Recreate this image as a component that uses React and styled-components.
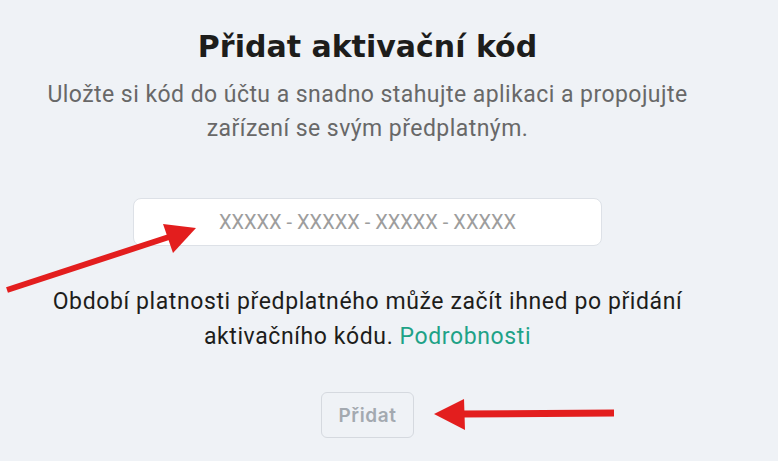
import React from "react";
import styled, { createGlobalStyle } from "styled-components";

const Global = createGlobalStyle`
  html, body { margin: 0; padding: 0; background: #eff2f6; }
  body { font-family: Roboto, "Noto Sans", sans-serif; }
  * { box-sizing: border-box; }
`;

const Page = styled.div`
  position: relative;
  width: 778px;
  height: 461px;
  overflow: hidden;
  background: #eff2f6;
`;

const Column = styled.main`
  width: 735px;
  display: flex;
  flex-direction: column;
  align-items: center;
  padding-top: 28px;
`;

const Title = styled.h1`
  margin: 0;
  font-family: "DejaVu Sans", Inter, sans-serif;
  font-weight: 700;
  font-size: 30px;
  line-height: 38px;
  color: #1d1d1b;
`;

const Subtitle = styled.p`
  margin: 12px 0 0;
  width: 670px;
  text-align: center;
  font-size: 23px;
  letter-spacing: 0.45px;
  line-height: 34px;
  color: #686868;
`;

const CodeInput = styled.input`
  margin-top: 52px;
  width: 469px;
  height: 48px;
  border: 1px solid #dde1e7;
  border-radius: 8px;
  background: #ffffff;
  text-align: center;
  font-family: Roboto, sans-serif;
  font-size: 20px;
  color: #333;
  outline: none;
  &::placeholder { color: #9d9d9d; }
`;

const Note = styled.p`
  margin: 38px 0 0;
  width: 670px;
  text-align: center;
  font-size: 23px;
  letter-spacing: 0.6px;
  line-height: 35px;
  color: #1d1d1b;
`;

const Link = styled.a`
  color: #1ea287;
  text-decoration: none;
`;

const AddButton = styled.button`
  margin-top: 38px;
  width: 93px;
  height: 46px;
  border: 1px solid #d5d9df;
  border-radius: 6px;
  background: transparent;
  font-family: Inter, sans-serif;
  font-weight: 600;
  font-size: 19px;
  letter-spacing: 0.6px;
  color: #a3a9b0;
`;

const Overlay = styled.svg`
  position: absolute;
  left: 0;
  top: 0;
  pointer-events: none;
`;

export default function App() {
  return (
    <Page>
      <Global />
      <Column>
        <Title>Přidat aktivační kód</Title>
        <Subtitle>
          Uložte si kód do účtu a snadno stahujte aplikaci a propojujte
          zařízení se svým předplatným.
        </Subtitle>
        <CodeInput placeholder="XXXXX - XXXXX - XXXXX - XXXXX" />
        <Note>
          Období platnosti předplatného může začít ihned po přidání
          aktivačního kódu. <Link href="#">Podrobnosti</Link>
        </Note>
        <AddButton disabled>Přidat</AddButton>
      </Column>
      <Overlay width="778" height="461" viewBox="0 0 778 461">
        <line x1="7" y1="290" x2="172" y2="236" stroke="#e31e1e" strokeWidth="6" />
        <polygon points="196,228 163,224 173,253" fill="#e31e1e" />
        <line x1="614" y1="413" x2="460" y2="414" stroke="#e31e1e" strokeWidth="7" />
        <polygon points="434,414 464,399 465,430" fill="#e31e1e" />
      </Overlay>
    </Page>
  );
}
